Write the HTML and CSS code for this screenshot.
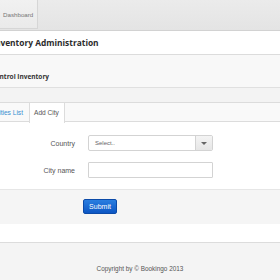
FILE: index.html
```html
<!DOCTYPE html>
<html>
<head>
<meta charset="utf-8">
<link rel="stylesheet" href="styles.css">
</head>
<body>
<div class="topbar">
  <a class="dash-btn">Dashboard</a>
</div>
<div class="page-head">
  <h1>Inventory Administration</h1>
</div>
<div class="main">
  <div class="widget-header"><h3>Control Inventory</h3></div>
  <div class="widget-content">
    <ul class="tabs">
      <li class="tab link">Cities List</li>
      <li class="tab active">Add City</li>
    </ul>
    <div class="pane">
      <div class="form-row">
        <label class="lbl">Country</label>
        <div class="select"><span class="sel-text">Select..</span><span class="sel-arrow"><span class="tri"></span></span></div>
      </div>
      <div class="form-row">
        <label class="lbl">City name</label>
        <input class="text-input" type="text">
      </div>
    </div>
    <div class="actions">
      <button class="submit">Submit</button>
    </div>
  </div>
</div>
<div class="spacer"></div>
<footer class="footer">Copyright by © Bookingo 2013</footer>
</body>
</html>
```

FILE: styles.css
```css
* { box-sizing: border-box; }
html, body { margin: 0; padding: 0; }
body {
  width: 280px;
  height: 280px;
  overflow: hidden;
  font-family: "Liberation Sans", Arial, sans-serif;
  background: #ffffff;
  color: #555;
}

.topbar {
  height: 31px;
  background: linear-gradient(#ebebeb, #e4e4e4);
  border-bottom: 1px solid #d2d2d2;
  display: flex;
  align-items: flex-start;
}
.dash-btn {
  display: flex;
  align-items: center;
  height: 29px;
  padding: 0 5px 0 3px;
  width: 38px;
  background: linear-gradient(#f1f1f1, #eaeaea);
  border-right: 1px solid #d6d6d6;
  border-bottom: 1px solid #d6d6d6;
  font-size: 6.2px;
  color: #777;
  white-space: nowrap;
}

.page-head {
  height: 24px;
  background: #fff;
  border-bottom: 1px solid #dcdcdc;
  display: flex;
  align-items: center;
}
.page-head h1 {
  margin: 0 0 0 -7.9px;
  font-family: "Open Sans", sans-serif;
  font-weight: 700;
  font-size: 8.4px;
  color: #2b2b2b;
  white-space: nowrap;
}

.main {
  background: #f8f8f8;
  padding-top: 11px;
}
.widget-header {
  height: 22px;
  border-bottom: 1px solid #e0e0e0;
  display: flex;
  align-items: center;
}
.widget-header h3 {
  margin: 0 0 0 -8.6px;
  font-family: "Open Sans", sans-serif;
  font-weight: 700;
  font-size: 6.5px;
  color: #333;
  white-space: nowrap;
}

.widget-content {
  padding-top: 14px;
  background: #f3f3f3;
}
.tabs {
  list-style: none;
  margin: 0;
  padding: 0;
  display: flex;
  height: 20px;
  background: #f9f9f9;
  border-top: 1px solid #dcdcdc;
  border-bottom: 1px solid #dcdcdc;
}
.tab {
  font-size: 6.6px;
  display: flex;
  align-items: center;
  white-space: nowrap;
}
.tab.link {
  color: #3a8fd0;
  margin-left: -5.6px;
  padding-right: 4px;
  margin-right: 2px;
  height: 18px;
}
.tab.active {
  background: #fff;
  color: #555;
  border: 1px solid #dcdcdc;
  border-bottom: none;
  margin-top: -1px;
  margin-bottom: -1px;
  height: 21px;
  padding: 0 5px 1px 4px;
}

.pane {
  background: #fff;
  padding: 13px 0 11px;
  display: flex;
  flex-direction: column;
  gap: 11px;
}
.form-row {
  display: grid;
  grid-template-columns: 75px 125px;
  column-gap: 13px;
  align-items: center;
}
.lbl {
  text-align: right;
  font-size: 7px;
  color: #555;
}
.select {
  height: 16px;
  border: 1px solid #d3d3d3;
  border-radius: 2px;
  background: #fff;
  display: flex;
  align-items: center;
  overflow: hidden;
}
.sel-text {
  flex: 1;
  font-size: 6px;
  color: #666;
  padding-left: 6px;
}
.sel-arrow {
  width: 17px;
  height: 100%;
  border-left: 1px solid #d3d3d3;
  background: linear-gradient(#f4f4f4, #e6e6e6);
  display: flex;
  align-items: center;
  justify-content: center;
}
.tri {
  width: 0;
  height: 0;
  border-left: 3px solid transparent;
  border-right: 3px solid transparent;
  border-top: 3px solid #666;
}
.text-input {
  height: 16px;
  margin: 0;
  border: 1px solid #d3d3d3;
  border-radius: 1px;
  background: #fff;
  padding: 0;
}

.actions {
  background: #f5f5f5;
  border-top: 1px solid #e6e6e6;
  padding: 9px 0 10px 83px;
  height: 35px;
}
.submit {
  display: block;
  width: 34px;
  height: 15px;
  margin: 0;
  padding: 0;
  border: 1px solid #0b4aa8;
  border-radius: 2px;
  background: linear-gradient(#2a7ee0, #0c56c4);
  color: #fff;
  font-family: "Liberation Sans", Arial, sans-serif;
  font-size: 7px;
}

.spacer {
  height: 18px;
  background: #fff;
}
.footer {
  border-top: 1px solid #dcdcdc;
  background: #f4f4f4;
  height: 60px;
  padding-top: 22px;
  text-align: center;
  font-size: 6.4px;
  color: #555;
}
```
